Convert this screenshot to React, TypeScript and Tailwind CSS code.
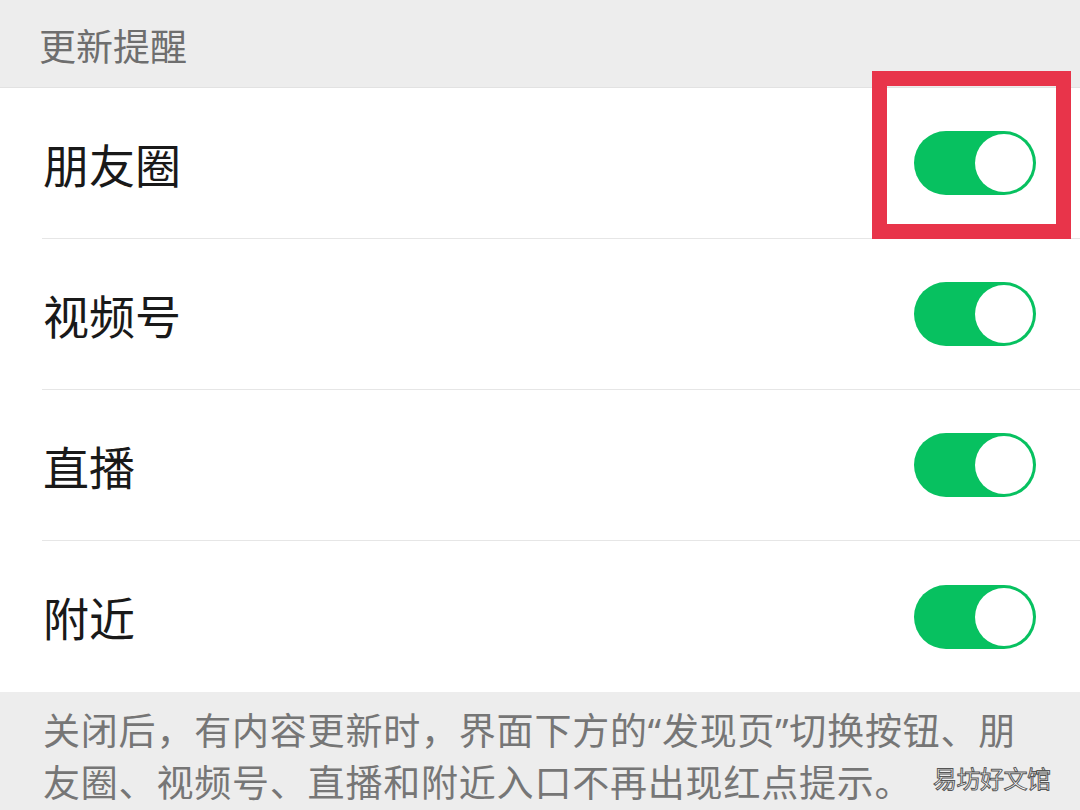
import React from "react";

function Toggle() {
  return (
    <div className="relative w-[122px] h-[64px] rounded-full bg-[#07c160] shrink-0">
      <div className="absolute right-[3px] top-[3px] w-[58px] h-[58px] rounded-full bg-white" />
    </div>
  );
}

const rows = ["朋友圈", "视频号", "直播", "附近"];

export default function App() {
  return (
    <div
      className="w-[1080px] h-[810px] bg-[#ededed] overflow-hidden relative flex flex-col"
      style={{ fontFamily: '"Noto Sans CJK SC", "Noto Sans", sans-serif' }}
    >
      <div className="h-[88px] flex items-center pl-[39px] pt-[4px] text-[37px] text-[#6e6e6e] border-b border-[#e2e2e2]">
        更新提醒
      </div>
      <div className="bg-white flex flex-col">
        {rows.map((r, i) => (
          <div key={r} className="pl-[42px]">
            <div
              className={`h-[151px] flex items-center justify-between pr-[44px] ${
                i < rows.length - 1 ? "border-b border-[#e6e6e6]" : ""
              }`}
            >
              <span className="text-[46px] text-[#191919] pl-[1px]">{r}</span>
              <Toggle />
            </div>
          </div>
        ))}
      </div>
      <div
        className="px-[43px] pt-[13px] text-[37px] leading-[52px] text-[#767676] whitespace-nowrap tracking-[0.8px]"
        style={{ fontFamily: '"Noto Sans", "Noto Sans CJK SC", sans-serif' }}
      >
        <div>关闭后，有内容更新时，界面下方的“发现页”切换按钮、朋</div>
        <div>友圈、视频号、直播和附近入口不再出现红点提示。</div>
      </div>
      <div className="absolute left-[872px] top-[71px] w-[199px] h-[168px] border-[15px] border-[#e8344a]" />
      <div
        className="absolute left-[933px] top-[760px] text-[24px] text-white"
        style={{ WebkitTextStroke: "1px #555", letterSpacing: "-0.5px" }}
      >
        易坊好文馆
      </div>
    </div>
  );
}
